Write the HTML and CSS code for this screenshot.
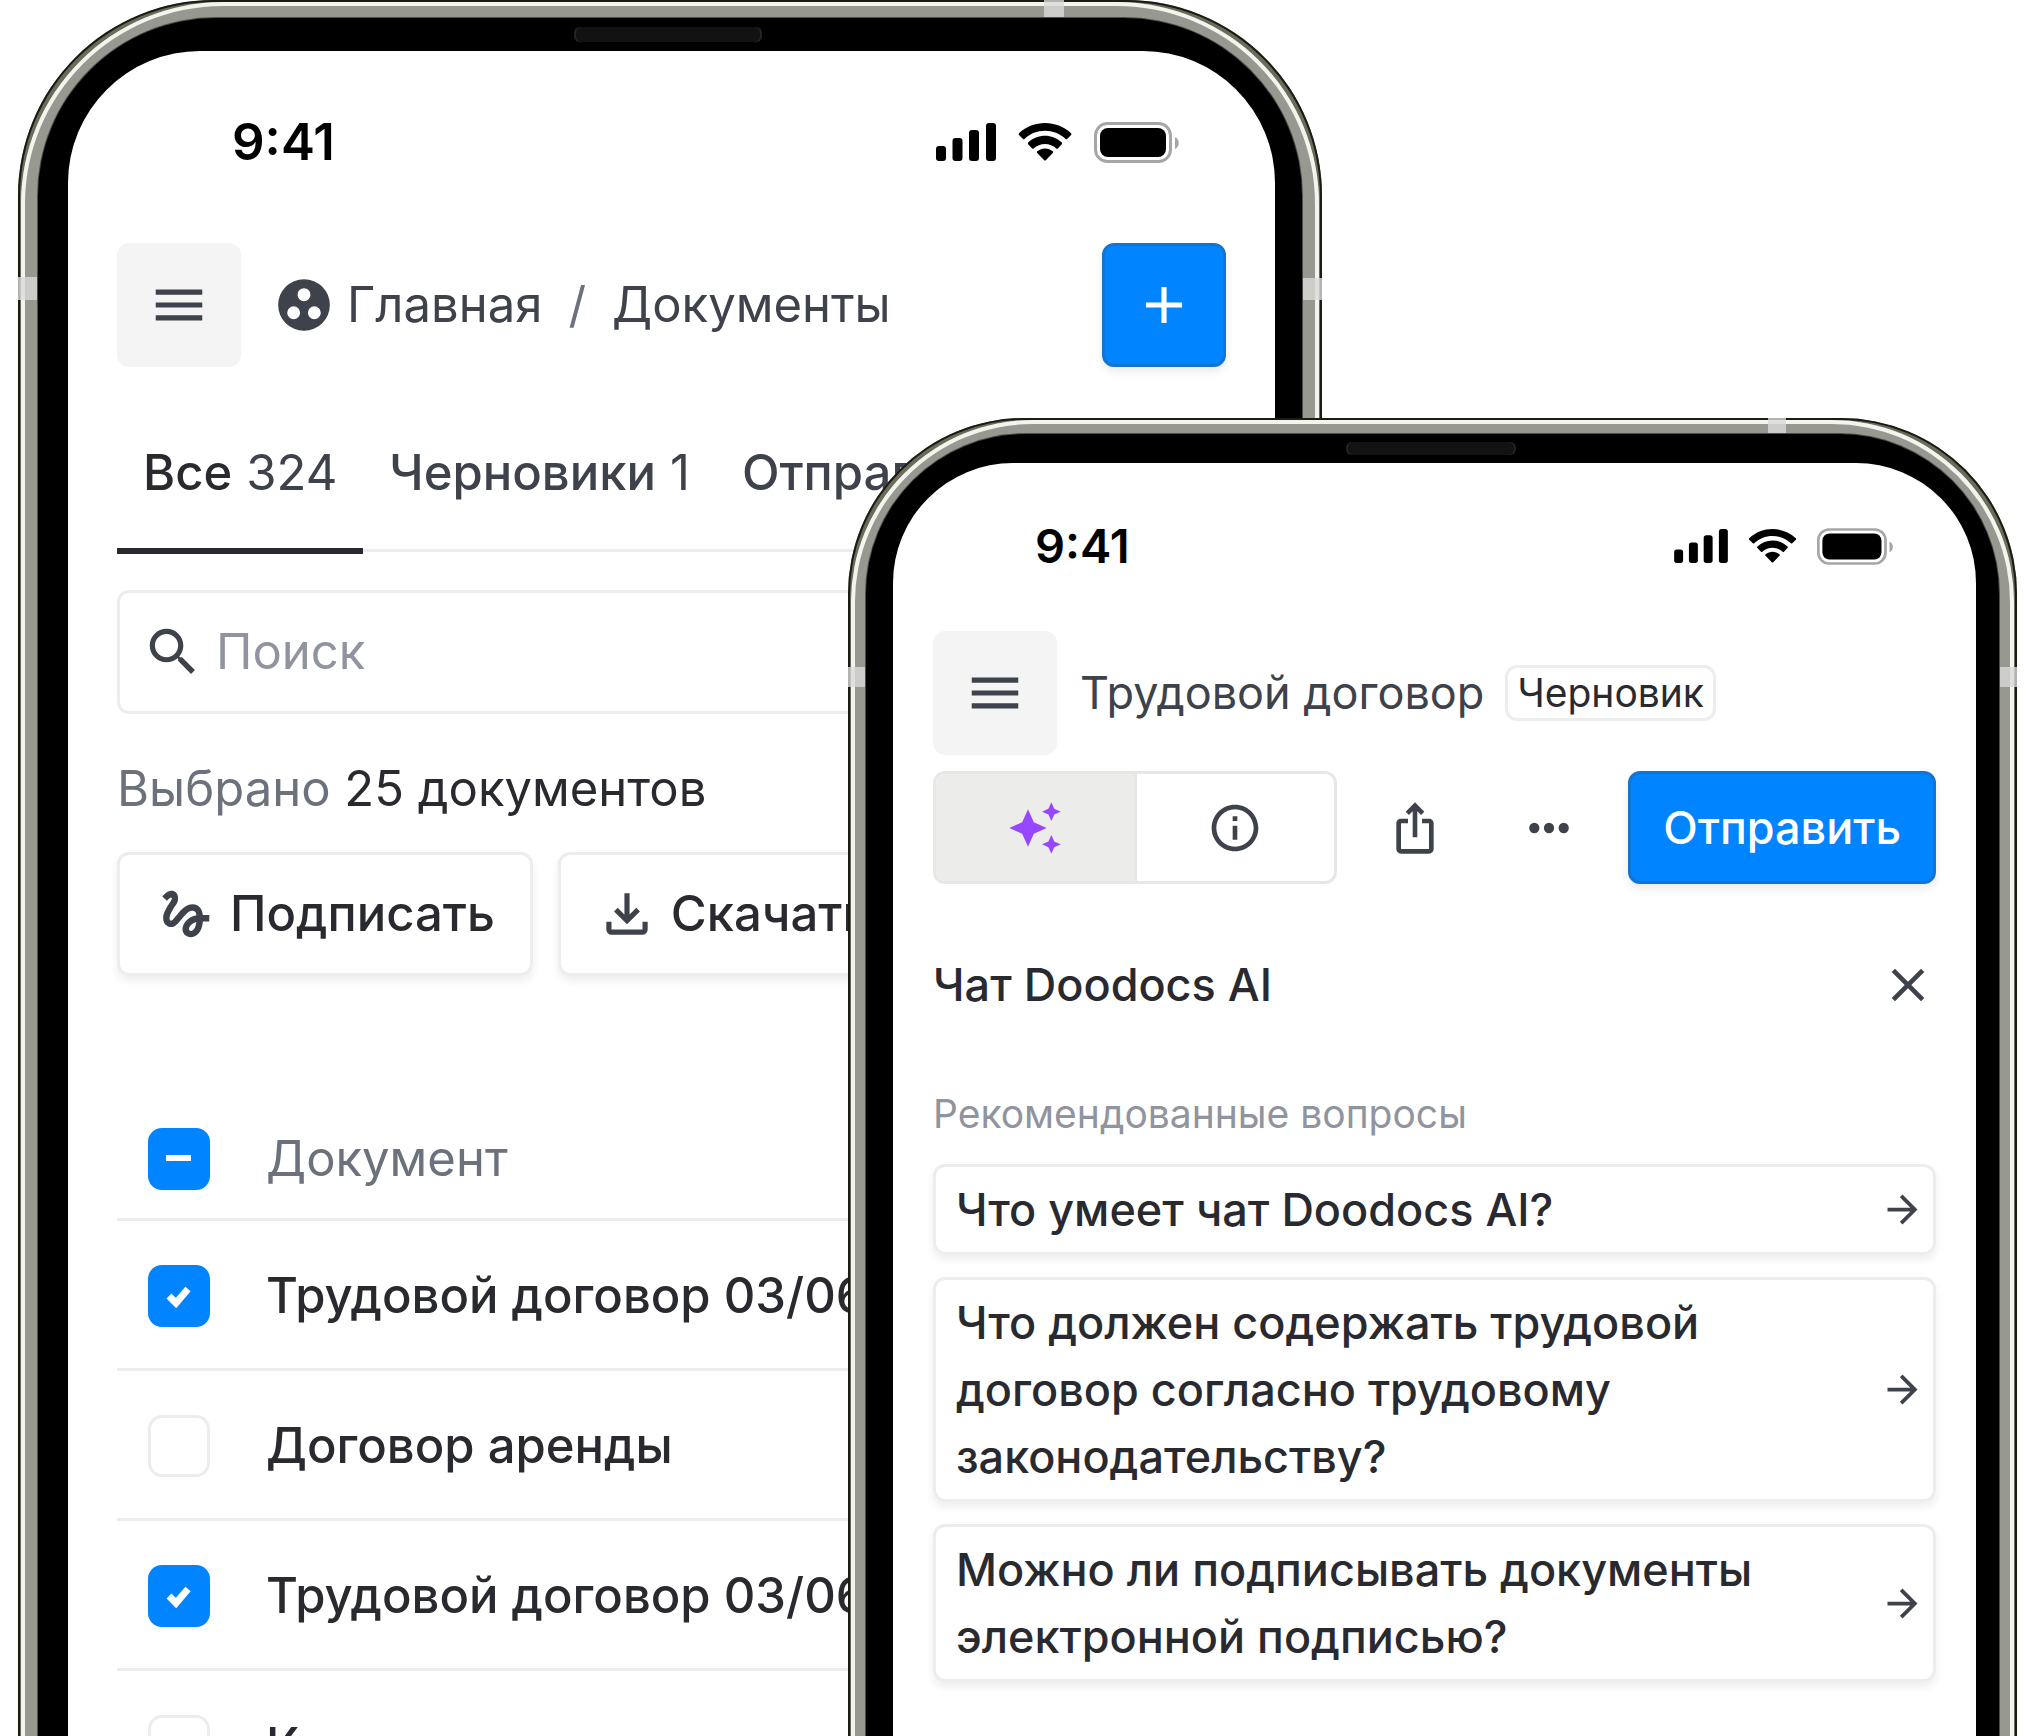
FILE: index.html
```html
<!DOCTYPE html>
<html lang="ru">
<head>
<meta charset="utf-8">
<meta name="viewport" content="width=device-width, initial-scale=1">
<title>Doodocs</title>
<link rel="stylesheet" href="styles.css">
</head>
<body>
<svg class="sprite" aria-hidden="true">
  <symbol id="i-menu" viewBox="0 0 24 24"><path d="M3 18h18v-2H3v2zm0-5h18v-2H3v2zm0-7v2h18V6H3z"/></symbol>
  <symbol id="i-signal" viewBox="0 0 60 38"><rect x="0" y="23" width="10" height="15" rx="3"/><rect x="16.500" y="15" width="10" height="23" rx="3"/><rect x="33" y="7" width="10" height="31" rx="3"/><rect x="50" y="0" width="10" height="38" rx="3"/></symbol>
  <symbol id="i-wifi" viewBox="0 0 54 38"><path d="M27 7.800c7.700 0 15 2.900 20.600 8.200.4.400 1.100.4 1.500 0l4-4.100c.5-.5.5-1.200 0-1.700C38.500-3.400 15.500-3.400 1 10.200c-.5.500-.5 1.200 0 1.700l4 4.100c.4.400 1.100.4 1.500 0C12 10.700 19.300 7.800 27 7.800z"/><path d="M27 21c4.200 0 8.200 1.600 11.300 4.400.4.400 1.100.4 1.500 0l4-4.100c.4-.5.4-1.200 0-1.700-9.500-9.100-24.200-9.100-33.700 0-.4.5-.4 1.200 0 1.700l4 4.100c.4.400 1.100.4 1.500 0C18.800 22.600 22.800 21 27 21z"/><path d="M34.800 30c.5-.5.500-1.300 0-1.700-4.500-3.900-11.100-3.900-15.600 0-.5.400-.5 1.200 0 1.700l7 7.200c.4.500 1.200.5 1.600 0z"/></symbol>
  <symbol id="i-battery" viewBox="0 0 86 41"><rect x="1.500" y="1.500" width="75" height="38" rx="12" fill="none" stroke="#a6a6a6" stroke-width="3"/><rect x="6" y="6" width="66" height="29" rx="8"/><path d="M81 15v12c5-2 5-10 0-12z" fill="#a6a6a6"/></symbol>
  <symbol id="i-arrow" viewBox="0 0 24 24"><path d="M12 4l-1.410 1.410L16.170 11H4v2h12.170l-5.580 5.590L12 20l8-8z"/></symbol>
</svg>

<main class="stage">
  <section class="phone phone-back" aria-label="Документы">
    <span class="band band-top"></span><span class="band band-left"></span><span class="band band-right"></span>
    <div class="bezel">
      <span class="speaker"></span>
      <div class="screen">
        <div class="status">
          <span>9:41</span>
          <div class="status-icons">
            <svg class="signal"><use href="#i-signal"/></svg>
            <svg class="wifi"><use href="#i-wifi"/></svg>
            <svg class="battery"><use href="#i-battery"/></svg>
          </div>
        </div>

        <header class="topbar">
          <button class="menu-button" type="button" aria-label="Меню"><svg class="icon"><use href="#i-menu"/></svg></button>
          <nav class="crumbs" aria-label="Путь">
            <svg class="icon" viewBox="0 0 24 24"><path fill-rule="evenodd" d="M12 2a10 10 0 1 0 0 20 10 10 0 0 0 0-20zM8 17.500a2.500 2.500 0 1 1 0-5 2.500 2.500 0 0 1 0 5zM12 10.500a2.500 2.500 0 1 1 0-5 2.500 2.500 0 0 1 0 5zM16 17.500a2.500 2.500 0 1 1 0-5 2.500 2.500 0 0 1 0 5z"/></svg>
            <a href="#home">Главная</a>
            <span class="slash">/</span>
            <a href="#documents">Документы</a>
          </nav>
          <button class="add-button" type="button" aria-label="Создать"><svg class="icon" viewBox="0 0 24 24"><path d="M19 13h-6v6h-2v-6H5v-2h6V5h2v6h6v2z"/></svg></button>
        </header>

        <div class="tabs" role="tablist">
          <button class="tab tab-active" type="button" role="tab" aria-selected="true">Все <span>324</span></button>
          <button class="tab" type="button" role="tab" aria-selected="false">Черновики <span>1</span></button>
          <button class="tab" type="button" role="tab" aria-selected="false">Отправленные</button>
        </div>

        <label class="search">
          <svg class="icon" viewBox="0 0 24 24"><path d="M15.500 14h-.79l-.28-.27C15.410 12.590 16 11.110 16 9.500 16 5.910 13.090 3 9.500 3S3 5.910 3 9.500 5.910 16 9.500 16c1.610 0 3.090-.59 4.230-1.570l.27.28v.79l5 4.990L20.490 19l-4.990-5zm-6 0C7.010 14 5 11.990 5 9.500S7.010 5 9.500 5 14 7.010 14 9.500 11.990 14 9.500 14z"/></svg>
          <input type="search" placeholder="Поиск" aria-label="Поиск">
        </label>

        <p class="selected"><span>Выбрано</span> 25 документов</p>

        <div class="actions">
          <button class="action" type="button"><svg class="icon" viewBox="0 0 24 24"><path d="M4.590 6.890c.7-.71 1.400-1.350 1.710-1.220.5.200 0 1.030-.3 1.520-.25.420-2.860 3.890-2.860 6.310 0 1.280.48 2.340 1.340 2.980.75.560 1.740.730 2.640.460 1.070-.31 1.950-1.400 3.060-2.770 1.210-1.490 2.830-3.440 4.080-3.440 1.630 0 1.650 1.010 1.760 1.790-3.780.640-5.380 3.670-5.380 5.370 0 1.700 1.440 3.090 3.210 3.090 1.630 0 4.290-1.330 4.690-6.100H21v-2.500h-2.470c-.15-1.650-1.090-4.200-4.030-4.200-2.250 0-4.180 1.910-4.940 2.840-.58.730-2.060 2.480-2.290 2.720-.25.300-.68.840-1.110.840-.45 0-.72-.83-.36-1.920.350-1.090 1.400-2.860 1.850-3.520.780-1.140 1.300-1.920 1.300-3.280C8.950 3.690 7.310 3 6.440 3 5.120 3 3.970 4 3.720 4.250c-.36.360-.66.660-.88.930l1.750 1.710zm9.290 11.660c-.31 0-.74-.26-.74-.72 0-.6.730-2.200 2.870-2.760-.3 2.690-1.430 3.480-2.130 3.480z"/></svg>Подписать</button>
          <button class="action" type="button"><svg class="icon" viewBox="0 0 24 24"><path d="M12 16l-5-5 1.400-1.450 2.600 2.600V4h2v8.150l2.600-2.600L17 11l-5 5zM6 20q-.825 0-1.413-.587T4 18v-3h2v3h12v-3h2v3q0 .825-.587 1.413T18 20H6z"/></svg>Скачать</button>
        </div>

        <table class="documents">
          <thead>
            <tr><th class="pick"><input class="check check-mixed" type="checkbox" aria-label="Выбрать все"></th><th scope="col">Документ</th></tr>
          </thead>
          <tbody>
            <tr><td class="pick"><input class="check" type="checkbox" id="doc1" checked></td><td><label for="doc1">Трудовой договор 03/06</label></td></tr>
            <tr><td class="pick"><input class="check" type="checkbox" id="doc2"></td><td><label for="doc2">Договор аренды</label></td></tr>
            <tr><td class="pick"><input class="check" type="checkbox" id="doc3" checked></td><td><label for="doc3">Трудовой договор 03/06</label></td></tr>
            <tr><td class="pick"><input class="check" type="checkbox" id="doc4"></td><td><label for="doc4">Контракт</label></td></tr>
          </tbody>
        </table>
      </div>
    </div>
  </section>

  <section class="phone phone-front" aria-label="Трудовой договор">
    <span class="band band-top"></span><span class="band band-left"></span><span class="band band-right"></span>
    <div class="bezel">
      <span class="speaker"></span>
      <div class="screen">
        <div class="status">
          <span>9:41</span>
          <div class="status-icons">
            <svg class="signal"><use href="#i-signal"/></svg>
            <svg class="wifi"><use href="#i-wifi"/></svg>
            <svg class="battery"><use href="#i-battery"/></svg>
          </div>
        </div>

        <header class="topbar">
          <button class="menu-button" type="button" aria-label="Меню"><svg class="icon"><use href="#i-menu"/></svg></button>
          <h1 class="doc-title">Трудовой договор</h1>
          <span class="badge">Черновик</span>
        </header>

        <div class="toolbar">
          <div class="segments">
            <button class="segment segment-active" type="button" aria-label="Чат"><svg class="icon" viewBox="0 0 24 24"><path d="M19 9l1.250-2.750L23 5l-2.750-1.250L19 1l-1.250 2.750L15 5l2.750 1.250L19 9zm-7.500.5L9 4 6.500 9.500 1 12l5.500 2.500L9 20l2.500-5.500L17 12l-5.500-2.500zM19 15l-1.250 2.750L15 19l2.750 1.250L19 23l1.250-2.750L23 19l-2.750-1.250L19 15z"/></svg></button>
            <button class="segment" type="button" aria-label="Информация"><svg class="icon" viewBox="0 0 24 24"><path d="M11 7h2v2h-2zm0 4h2v6h-2zm1-9C6.480 2 2 6.480 2 12s4.480 10 10 10 10-4.480 10-10S17.520 2 12 2zm0 18c-4.410 0-8-3.590-8-8s3.590-8 8-8 8 3.590 8 8-3.590 8-8 8z"/></svg></button>
          </div>
          <button class="tool" type="button" aria-label="Поделиться"><svg class="icon" viewBox="0 0 24 24"><path d="M16 5l-1.420 1.420-1.590-1.590V16h-1.980V4.830L9.420 6.420 8 5l4-4 4 4zm4 5v11c0 1.100-.9 2-2 2H6c-1.110 0-2-.9-2-2V10c0-1.110.89-2 2-2h3v2H6v11h12V10h-3V8h3c1.100 0 2 .89 2 2z"/></svg></button>
          <button class="tool" type="button" aria-label="Ещё"><svg class="icon" viewBox="0 0 24 24"><circle cx="5.700" cy="12" r="2.200"/><circle cx="12" cy="12" r="2.200"/><circle cx="18.300" cy="12" r="2.200"/></svg></button>
          <button class="send" type="button">Отправить</button>
        </div>

        <div class="chat-head">
          <h2>Чат Doodocs AI</h2>
          <button class="close" type="button" aria-label="Закрыть"><svg class="icon" viewBox="0 0 24 24"><path d="M19 6.410L17.590 5 12 10.590 6.410 5 5 6.410 10.590 12 5 17.590 6.410 19 12 13.410 17.590 19 19 17.590 13.410 12z"/></svg></button>
        </div>

        <p class="hint">Рекомендованные вопросы</p>
        <div class="questions">
          <button class="question" type="button"><span>Что умеет чат Doodocs AI?</span><svg class="arrow"><use href="#i-arrow"/></svg></button>
          <button class="question" type="button"><span>Что должен содержать трудовой договор согласно трудовому законодательству?</span><svg class="arrow"><use href="#i-arrow"/></svg></button>
          <button class="question" type="button"><span>Можно ли подписывать документы электронной подписью?</span><svg class="arrow"><use href="#i-arrow"/></svg></button>
        </div>
      </div>
    </div>
  </section>
</main>
</body>
</html>
```
FILE: styles.css
```css
*, *::before, *::after { box-sizing: border-box; }

:root {
  --ink: #292a30;
  --slate: #3d424b;
  --muted: #6c727b;
  --faint: #8f949e;
  --line: #ededed;
  --blue: #0084ff;
}

body {
  margin: 0;
  background: #fff;
  color: var(--ink);
  font-family: Inter, "Liberation Sans", sans-serif;
}

h1, h2, p { margin: 0; font-weight: 400; }

button {
  display: flex;
  align-items: center;
  justify-content: center;
  margin: 0;
  padding: 0;
  border: 0;
  background: none;
  color: inherit;
  font: inherit;
}

a { color: inherit; text-decoration: none; }

.sprite { position: absolute; width: 0; height: 0; }

/* Two overlapping phones share the middle column */
.stage {
  display: grid;
  grid-template-columns: minmax(0, 18fr) minmax(0, 830fr) minmax(0, 474fr) minmax(0, 695fr) minmax(0, 15fr);
  grid-template-rows: minmax(0, 1fr);
  height: 100vh;
  overflow: hidden;
}

/* Phone frame: dark rim, olive bevel, bright highlight, grey band */
.phone {
  position: relative;
  grid-row: 1;
  display: grid;
  margin-bottom: -16px;
  background: #6b6b5c;
  box-shadow: inset 0 0 0 2px #1b1b13;
}
.phone::before {
  content: "";
  position: absolute;
  inset: 2px 3px 0;
  background: #979890;
  box-shadow: inset 0 0 0 4px #f3f4ee;
}
.bezel {
  position: relative;
  display: grid;
  grid-template-columns: minmax(0, 1fr);
  background: #000;
  box-shadow: 0 0 0 1px #4c4d48;
}
.screen {
  background: #fff;
  overflow: hidden;
}
.icon { flex: none; width: 62px; height: 62px; fill: currentColor; }

.phone-back {
  grid-column: 2 / 4;
  padding: 18px 20px 0;
  border-radius: 196px 196px 0 0;
  font-size: 49px;
  line-height: 64px;
}
.phone-back::before { border-radius: 202px 202px 0 0; }
.phone-back .bezel { padding: 33px 27px 0 30px; border-radius: 178px 178px 0 0; }
.phone-back .screen { padding: 59px 49px 0; border-radius: 132px 132px 0 0; }

.phone-front {
  grid-column: 3 / 5;
  margin-top: 418px;
  padding: 16px 18px 0;
  border-radius: 176px 176px 0 0;
  font-size: 45px;
  line-height: 64px;
}
.phone-front::before { border-radius: 182px 182px 0 0; }
.phone-front .bezel { padding: 29px 23px 0 27px; border-radius: 160px 160px 0 0; }
.phone-front .screen { padding: 51px 40px 0; border-radius: 120px 120px 0 0; }
.phone-front .icon { width: 56px; height: 56px; }
.phone-front .menu-button .icon { width: 62px; height: 62px; }

.band { position: absolute; background: rgba(217, 217, 217, .8); }
.phone-back .band-top { top: 0; right: 258px; width: 20px; height: 18px; }
.phone-back .band-left { top: 277px; left: 0; width: 20px; height: 23px; }
.phone-back .band-right { top: 278px; right: 0; width: 20px; height: 22px; }
.phone-front .band-top { top: 0; right: 231px; width: 18px; height: 16px; }
.phone-front .band-left { top: 249px; left: 0; width: 18px; height: 20px; }
.phone-front .band-right { top: 249px; right: 0; width: 18px; height: 20px; }

.speaker {
  position: absolute;
  top: 9px;
  left: 50%;
  width: 188px;
  height: 15px;
  margin-left: -96px;
  border-radius: 6px;
  background: #121212;
  box-shadow: inset 2px 0 #242424, inset -2px 0 #242424;
}
.phone-front .speaker { top: 8px; width: 170px; height: 13px; margin-left: -87px; }

/* Status bar */
.status {
  display: flex;
  align-items: center;
  justify-content: space-between;
  color: #000;
  font-weight: 600;
}
.status-icons { display: flex; align-items: center; }
.phone-back .status { padding: 0 46px 0 115px; font-size: 51px; }
.phone-front .status { padding: 0 42px 0 102px; font-size: 47px; }
.phone-back .status-icons { gap: 22px; }
.phone-front .status-icons { gap: 20px; }
.phone-back .signal { width: 60px; height: 38px; }
.phone-back .wifi { width: 54px; height: 38px; }
.phone-back .battery { width: 86px; height: 41px; }
.phone-front .signal { width: 54px; height: 34px; }
.phone-front .wifi { width: 49px; height: 34px; }
.phone-front .battery { width: 77px; height: 37px; }

/* Top bar */
.topbar { display: flex; align-items: center; color: var(--slate); }
.phone-back .topbar { margin-top: 69px; }
.phone-front .topbar { margin-top: 53px; }
.menu-button {
  flex: none;
  width: 124px;
  height: 124px;
  border-radius: 12px;
  background: #f4f4f4;
}
.crumbs { display: flex; align-items: center; margin-left: 32px; }
.crumbs a:first-of-type { margin-left: 12px; }
.slash { margin: 0 26px; color: var(--muted); }
.add-button {
  flex: none;
  width: 124px;
  height: 124px;
  margin-left: auto;
}
.add-button, .send {
  border: 3px solid #1474d4;
  border-radius: 12px;
  background: var(--blue);
  box-shadow: 0 5px 8px rgba(0, 0, 0, .08);
  color: #fff;
}
.doc-title { margin-left: 23px; font-size: 45px; white-space: nowrap; }
.badge {
  margin-left: 21px;
  padding: 0 9px;
  border: 3px solid var(--line);
  border-radius: 12px;
  color: var(--ink);
  font-size: 39px;
  line-height: 50px;
}

/* Documents screen */
.tabs {
  display: flex;
  margin-top: 74px;
  overflow: hidden;
  background: linear-gradient(var(--line), var(--line)) left 0 bottom 2px / 100% 3px no-repeat;
}
.tab {
  flex: none;
  gap: 14px;
  padding: 0 26px 43px;
  border-bottom: 6px solid transparent;
  color: var(--slate);
  font-weight: 500;
}
.tab span { font-weight: 400; }
.tab-active { border-color: var(--ink); color: var(--ink); }
.tab-active span { color: var(--slate); }

.search {
  display: flex;
  align-items: center;
  gap: 12px;
  height: 124px;
  margin-top: 36px;
  padding: 0 22px;
  border: 3px solid var(--line);
  border-radius: 12px;
  color: var(--slate);
}
.search input {
  flex: 1;
  min-width: 0;
  padding: 0;
  border: 0;
  outline: 0;
  background: none;
  color: var(--ink);
  font: inherit;
}
.search input::placeholder { color: var(--faint); opacity: 1; }

.selected { margin-top: 43px; }
.selected span { color: var(--muted); }

.actions { display: flex; gap: 25px; margin-top: 31px; }
.action {
  gap: 13px;
  height: 124px;
  padding: 0 35px;
  border: 3px solid var(--line);
  border-radius: 12px;
  box-shadow: 0 5px 8px rgba(0, 0, 0, .07);
  font-weight: 500;
}
.action .icon { color: var(--slate); }

.documents {
  width: 100%;
  margin-top: 122px;
  border-collapse: separate;
  border-spacing: 0;
}
.documents th, .documents td {
  height: 150px;
  padding: 2px 0 0;
  border-bottom: 3px solid var(--line);
  font-weight: 500;
  text-align: left;
  vertical-align: middle;
}
.documents th { height: 123px; color: var(--muted); font-weight: 400; }
.documents .pick { width: 149px; padding-left: 31px; }
.check {
  display: block;
  width: 62px;
  height: 62px;
  margin: 0;
  border: 3px solid var(--line);
  border-radius: 14px;
  background: #fff center / 62px 62px no-repeat;
  appearance: none;
}
.check:checked {
  border-color: var(--blue);
  background-color: var(--blue);
  background-image: url("data:image/svg+xml,%3Csvg xmlns='http://www.w3.org/2000/svg' viewBox='0 0 62 62'%3E%3Cpath d='M21 31l7 7 12-14' fill='none' stroke='%23fff' stroke-width='7'/%3E%3C/svg%3E");
}
.check-mixed {
  border-color: var(--blue);
  background-color: var(--blue);
  background-image: url("data:image/svg+xml,%3Csvg xmlns='http://www.w3.org/2000/svg' viewBox='0 0 62 62'%3E%3Cpath d='M18 30h25' stroke='%23fff' stroke-width='6'/%3E%3C/svg%3E");
}

/* Contract screen */
.toolbar {
  display: flex;
  align-items: stretch;
  gap: 22px;
  height: 113px;
  margin-top: 16px;
  color: var(--slate);
}
.segments {
  display: flex;
  flex: 0 1 404px;
  border: 3px solid #e7e7e6;
  border-radius: 12px;
  overflow: hidden;
}
.segment { flex: 1; }
.segment-active {
  border-right: 3px solid #e7e7e6;
  background: #ececeb;
  color: #9747ff;
}
.tool { flex: none; width: 112px; }
.send { flex: none; margin-left: auto; padding: 0 32px; font-weight: 500; }

.chat-head {
  display: flex;
  align-items: center;
  justify-content: space-between;
  margin-top: 69px;
}
.chat-head h2 { font-size: 45px; font-weight: 500; }
.close { color: var(--slate); }

.hint {
  margin-top: 69px;
  color: var(--faint);
  font-size: 39px;
  line-height: 56px;
}
.questions { display: grid; gap: 22px; margin-top: 22px; }
.question {
  justify-content: space-between;
  padding: 9px 8px 9px 20px;
  border: 3px solid var(--line);
  border-radius: 12px;
  box-shadow: 0 5px 8px rgba(0, 0, 0, .07);
  font-weight: 500;
  line-height: 67px;
  text-align: left;
}
.question span { max-width: 830px; }
.arrow { flex: none; width: 45px; height: 45px; fill: var(--slate); }
```
